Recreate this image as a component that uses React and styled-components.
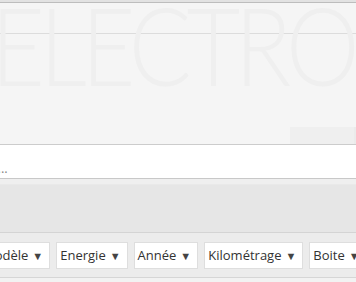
import React from "react";
import styled, { createGlobalStyle } from "styled-components";

const GlobalStyle = createGlobalStyle`
  body {
    margin: 0;
    background-color: #f2f2f2;
    font-family: "Open Sans", "Liberation Sans", sans-serif;
    overflow: hidden;
  }
`;

const Page = styled.div`
  width: 356px;
  height: 282px;
  overflow: hidden;
  display: flex;
  flex-direction: column;
`;

const TopBar = styled.div`
  height: 2px;
  background-color: #e2e2e2;
  border-bottom: 1px solid #bdbdbd;
`;

const Hero = styled.div`
  position: relative;
  height: 141px;
  background-color: #f5f5f5;
  overflow: hidden;
`;

const HeroLine = styled.div`
  height: 30px;
  border-bottom: 1px solid #dcdcdc;
`;

const Watermark = styled.div`
  position: absolute;
  left: -9px;
  top: -24px;
  font-family: Lato, "Open Sans", sans-serif;
  font-weight: 300;
  font-size: 108px;
  letter-spacing: -6px;
  color: #efefef;
  white-space: nowrap;
  transform: scaleX(0.86);
  transform-origin: left top;
`;

const CornerBox = styled.div`
  position: absolute;
  right: 0;
  bottom: 0;
  width: 64px;
  height: 17px;
  background-color: #efefef;
  border-right: 2px solid #ebebeb;
`;

const SearchBar = styled.div`
  height: 33px;
  background-color: #fff;
  border-top: 1px solid #cccccc;
  border-bottom: 1px solid #c8c8c8;
  display: flex;
  align-items: center;
`;

const Placeholder = styled.span`
  margin-left: -144px;
  padding-top: 12px;
  font-size: 13px;
  color: #888;
  white-space: nowrap;
`;

const Band = styled.div`
  height: 5px;
  background-color: #efefef;
  border-bottom: 1px solid #e9e9e9;
`;

const Panel = styled.div`
  height: 47px;
  background-color: #e6e6e6;
  border-bottom: 1px solid #d4d4d4;
`;

const Filters = styled.div`
  height: 44px;
  background-color: #ececec;
  border-bottom: 1px solid #d6d6d6;
  display: flex;
  align-items: center;
  gap: 6px;
  margin-left: -21px;
  white-space: nowrap;
`;

const Select = styled.div`
  flex: none;
  height: 27px;
  box-sizing: border-box;
  display: flex;
  align-items: center;
  gap: 4px;
  padding: 0 6px 0 3px;
  background-color: #fff;
  border: 1px solid #dedede;
  font-size: 13px;
  color: #333;
`;

const Arrow = styled.span`
  font-size: 11px;
  color: #444;
  padding-top: 1px;
`;

const filters = ["Modèle", "Energie", "Année", "Kilométrage", "Boite"];

const App = () => {
  return (
    <Page>
      <GlobalStyle />
      <TopBar />
      <Hero>
        <HeroLine />
        <Watermark>ELECTRON</Watermark>
        <CornerBox />
      </Hero>
      <SearchBar>
        <Placeholder>Rechercher un véhicule...</Placeholder>
      </SearchBar>
      <Band />
      <Panel />
      <Filters>
        {filters.map((f) => (
          <Select key={f}>
            {f}
            <Arrow>▼</Arrow>
          </Select>
        ))}
      </Filters>
    </Page>
  );
};

export default App;
